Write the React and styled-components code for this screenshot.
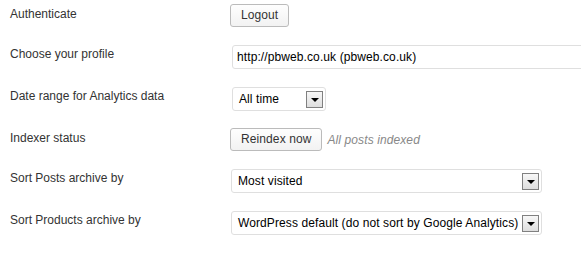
import React from 'react';
import styled, { createGlobalStyle } from 'styled-components';

const Global = createGlobalStyle`
  html, body {
    margin: 0;
    padding: 0;
    background: #fff;
    overflow: hidden;
  }
  body {
    font-family: "Liberation Sans", Arial, sans-serif;
    font-size: 12px;
    color: #333;
  }
`;

const Form = styled.div`
  padding: 4px 0 0 10px;
  overflow: hidden;
`;

const Row = styled.div`
  display: grid;
  grid-template-columns: 220px 1fr;
  align-items: start;
  height: ${(p) => p.$h || 41}px;
`;

const Label = styled.div`
  padding-top: ${(p) => p.$top ?? 2}px;
  line-height: 14px;
  color: #333;
`;

const Field = styled.div`
  display: flex;
  align-items: center;
  gap: 5px;
  min-width: 0;
`;

const Button = styled.button`
  height: 23px;
  padding: 0 10px;
  margin: 0;
  border: 1px solid #bbb;
  border-radius: 3px;
  background: linear-gradient(#fefefe, #f2f2f2);
  font-family: "Liberation Sans", Arial, sans-serif;
  font-size: 12px;
  letter-spacing: 0.1px;
  color: #333;
  line-height: 21px;
`;

const Note = styled.span`
  font-style: italic;
  color: #888;
  letter-spacing: 0.1px;
`;

const TextInput = styled.div`
  box-sizing: border-box;
  margin-left: 2px;
  flex: 0 0 400px;
  height: 24px;
  padding: 0 4px;
  border: 1px solid #dfdfdf;
  border-radius: 3px;
  line-height: 22px;
  color: #000;
  white-space: nowrap;
  letter-spacing: 0.1px;
`;

const SelectBox = styled.div`
  box-sizing: border-box;
  margin-left: ${(p) => p.$ml ?? 1}px;
  width: ${(p) => p.$w}px;
  height: 24px;
  display: flex;
  align-items: center;
  justify-content: space-between;
  padding: 0 2px 0 6px;
  border: 1px solid #dfdfdf;
  border-radius: 3px;
  color: #000;
  white-space: nowrap;
  letter-spacing: 0.1px;
`;

const Arrow = styled.span`
  box-sizing: border-box;
  width: 17px;
  height: 17px;
  border: 1px solid #808080;
  background: linear-gradient(#f7f7f7, #dedede);
  display: flex;
  align-items: center;
  justify-content: center;
  &::after {
    content: '';
    width: 0;
    height: 0;
    margin-top: 1px;
    border-left: 4px solid transparent;
    border-right: 4px solid transparent;
    border-top: 4px solid #000;
  }
`;

const Select = ({ value, width, ml }) => (
  <SelectBox $w={width} $ml={ml}>
    <span>{value}</span>
    <Arrow />
  </SelectBox>
);

export default function App() {
  return (
    <>
      <Global />
      <Form>
        <Row $h={41}>
          <Label $top={3}>Authenticate</Label>
          <Field>
            <Button>Logout</Button>
          </Field>
        </Row>
        <Row $h={42}>
          <Label>Choose your profile</Label>
          <Field>
            <TextInput>http://pbweb.co.uk (pbweb.co.uk)</TextInput>
          </Field>
        </Row>
        <Row $h={41}>
          <Label>Date range for Analytics data</Label>
          <Field>
            <Select value="All time" width={94} ml={2} />
          </Field>
        </Row>
        <Row $h={41}>
          <Label $top={3}>Indexer status</Label>
          <Field>
            <Button>Reindex now</Button>
            <Note>All posts indexed</Note>
          </Field>
        </Row>
        <Row $h={42}>
          <Label>Sort Posts archive by</Label>
          <Field>
            <Select value="Most visited" width={311} />
          </Field>
        </Row>
        <Row $h={41}>
          <Label>Sort Products archive by</Label>
          <Field>
            <Select value="WordPress default (do not sort by Google Analytics)" width={311} />
          </Field>
        </Row>
      </Form>
    </>
  );
}
